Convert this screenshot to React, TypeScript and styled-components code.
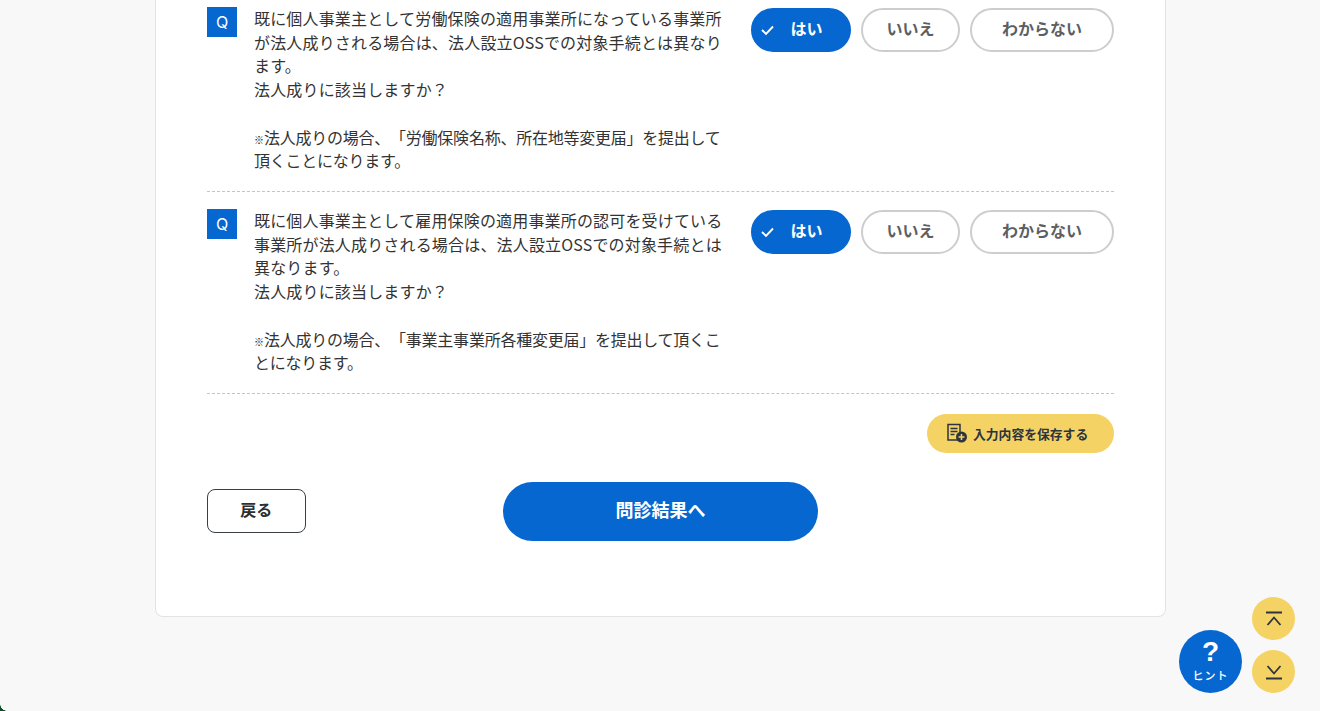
import React from "react";
import styled, { createGlobalStyle } from "styled-components";

const Global = createGlobalStyle`
  html, body { margin: 0; padding: 0; background: #f8f8f8; }
  body { font-family: "Noto Sans CJK JP", "Noto Sans", sans-serif; color: #333; overflow: hidden; text-spacing-trim: space-all; }
  * { box-sizing: border-box; }
`;

const Page = styled.div`
  position: relative;
  width: 1320px;
  height: 711px;
  overflow: hidden;
  background: #f8f8f8;
  display: flex;
  align-items: flex-start;
  padding-left: 155px;
`;

const Card = styled.main`
  width: 1011px;
  height: 617px;
  background: #fff;
  border: 1px solid #e3e3e3;
  border-top: none;
  border-radius: 0 0 8px 8px;
  padding: 0 51px;
  display: flex;
  flex-direction: column;
`;

const Row = styled.section<{ $first?: boolean }>`
  display: flex;
  align-items: flex-start;
  height: ${(p) => (p.$first ? "192px" : "202px")};
  padding-top: ${(p) => (p.$first ? "7px" : "17px")};
  border-bottom: 1px dashed #c4c4c4;
`;

const QBadge = styled.span`
  width: 30px;
  height: 30px;
  flex: none;
  margin-right: 17px;
  background: #0767d0;
  color: #fff;
  font-family: Inter, "Liberation Sans", sans-serif;
  font-size: 16px;
  font-weight: 400;
  display: flex;
  align-items: center;
  justify-content: center;
`;

const Question = styled.p`
  margin: 0;
  width: 470px;
  flex: none;
  font-size: 16px;
  line-height: 23.7px;
  color: #333;
  white-space: pre-line;
  letter-spacing: 0.17px;
`;

const NoteMark = styled.span`
  font-size: 10px;
  line-height: 0;
  font-weight: 900;
  letter-spacing: 0;
  color: #111;
`;

const NoteText = styled.span`
  letter-spacing: -0.24px;
`;

const Choices = styled.div`
  display: flex;
  gap: 10px;
  margin-left: auto;
  margin-top: 1px;
`;

const Choice = styled.button<{ $selected?: boolean; $w: number }>`
  position: relative;
  width: ${(p) => p.$w}px;
  height: 44px;
  border-radius: 22px;
  border: 2px solid ${(p) => (p.$selected ? "#0767d0" : "#cdcdcd")};
  background: ${(p) => (p.$selected ? "#0767d0" : "#fff")};
  color: ${(p) => (p.$selected ? "#fff" : "#5b5e62")};
  font-family: inherit;
  font-size: 16px;
  font-weight: 700;
  padding: 0 0 4px ${(p) => (p.$selected ? "11px" : "0")};
  display: flex;
  align-items: center;
  justify-content: center;
`;

const Check = styled.svg`
  position: absolute;
  left: 7px;
  top: 14px;
`;

const SaveRow = styled.div`
  display: flex;
  justify-content: flex-end;
  margin-top: 20px;
`;

const SaveButton = styled.button`
  width: 187px;
  height: 39px;
  border: none;
  border-radius: 20px;
  background: #f5d264;
  color: #2c3440;
  font-family: inherit;
  font-size: 12.8px;
  font-weight: 700;
  padding: 0 0 1px 19px;
  display: flex;
  align-items: center;
  gap: 5px;
`;

const Actions = styled.div`
  display: grid;
  grid-template-columns: 1fr auto 1fr;
  align-items: start;
  margin-top: 29px;
`;

const BackCell = styled.div`
  padding-top: 7px;
`;

const BackButton = styled.button`
  display: block;
  width: 98.5px;
  height: 44px;
  border: 1px solid #3a3f45;
  border-radius: 8px;
  background: #fff;
  color: #2b2f33;
  font-family: inherit;
  font-size: 16px;
  font-weight: 700;
  padding: 0 0 4px;
`;

const NextButton = styled.button`
  width: 315px;
  height: 59px;
  border: none;
  border-radius: 30px;
  background: #0767d0;
  color: #fff;
  font-family: inherit;
  font-size: 18px;
  font-weight: 700;
  padding: 0 0 5px;
`;

const HintButton = styled.button`
  position: absolute;
  left: 1179px;
  top: 630px;
  width: 63px;
  height: 63px;
  border: none;
  border-radius: 50%;
  background: #0767d0;
  color: #fff;
  font-family: inherit;
  padding: 0;
  display: flex;
  flex-direction: column;
  align-items: center;
`;

const HintMark = styled.span`
  font-family: "Liberation Sans", Arial, sans-serif;
  font-size: 28px;
  line-height: 30px;
  font-weight: 700;
  margin-top: 7px;
`;

const HintLabel = styled.span`
  font-size: 11px;
  line-height: 14px;
  font-weight: 500;
  letter-spacing: 1px;
  margin-top: 1px;
`;

const ScrollButton = styled.button<{ $top: number }>`
  position: absolute;
  left: 1252px;
  top: ${(p) => p.$top}px;
  width: 43px;
  height: 43px;
  border: none;
  border-radius: 50%;
  background: #f5d264;
  padding: 0;
  display: flex;
  align-items: center;
  justify-content: center;
`;

const WindowCorner = styled.div`
  position: absolute;
  left: 0;
  bottom: 0;
  width: 7px;
  height: 7px;
  background: radial-gradient(circle at 100% 0, transparent 6.5px, #0d4f2c 7px);
`;

const Answers = () => (
  <Choices>
    <Choice $selected $w={100}>
      <Check width="16" height="12" viewBox="0 0 16 12" fill="none">
        <path d="M2 6l4 4 7-7.5" stroke="#fff" strokeWidth="1.9" />
      </Check>
      はい
    </Choice>
    <Choice $w={99}>いいえ</Choice>
    <Choice $w={144}>わからない</Choice>
  </Choices>
);

export default function App() {
  return (
    <Page>
      <Global />
      <Card>
        <Row $first>
          <QBadge>Q</QBadge>
          <Question>
            {"既に個人事業主として労働保険の適用事業所になっている事業所が法人成りされる場合は、法人設立OSSでの対象手続とは異なります。\n法人成りに該当しますか？\n\n"}
            <NoteMark>※</NoteMark>
            <NoteText>法人成りの場合、「労働保険名称、所在地等変更届」を提出して頂くことになります。</NoteText>
          </Question>
          <Answers />
        </Row>
        <Row>
          <QBadge>Q</QBadge>
          <Question>
            {"既に個人事業主として雇用保険の適用事業所の認可を受けている事業所が法人成りされる場合は、法人設立OSSでの対象手続とは異なります。\n法人成りに該当しますか？\n\n"}
            <NoteMark>※</NoteMark>
            <NoteText>法人成りの場合、「事業主事業所各種変更届」を提出して頂くことになります。</NoteText>
          </Question>
          <Answers />
        </Row>
        <SaveRow>
          <SaveButton>
            <svg width="22" height="20" viewBox="0 0 22 20" fill="none">
              <path d="M12 17H2V1.5h12V9" stroke="#2c3440" strokeWidth="1.5" />
              <path d="M4.5 5.5h7M4.5 8.5h7M4.5 11.5h4" stroke="#2c3440" strokeWidth="1.3" />
              <circle cx="15.5" cy="14" r="5.5" fill="#2c3440" />
              <path d="M15.5 11v6M12.5 14h6" stroke="#f5d264" strokeWidth="1.6" />
            </svg>
            入力内容を保存する
          </SaveButton>
        </SaveRow>
        <Actions>
          <BackCell>
            <BackButton>戻る</BackButton>
          </BackCell>
          <NextButton>問診結果へ</NextButton>
          <div />
        </Actions>
      </Card>
      <ScrollButton $top={597} aria-label="top">
        <svg width="18" height="16" viewBox="0 0 18 16" fill="none">
          <path d="M1 1.5h16M2.5 14L9 6.5l6.5 7.5" stroke="#2c3440" strokeWidth="1.8" />
        </svg>
      </ScrollButton>
      <ScrollButton $top={650} aria-label="bottom">
        <svg width="18" height="16" viewBox="0 0 18 16" fill="none">
          <path d="M1 14.5h16M2.5 2L9 9.5 15.5 2" stroke="#2c3440" strokeWidth="1.8" />
        </svg>
      </ScrollButton>
      <HintButton>
        <HintMark>?</HintMark>
        <HintLabel>ヒント</HintLabel>
      </HintButton>
      <WindowCorner />
    </Page>
  );
}
